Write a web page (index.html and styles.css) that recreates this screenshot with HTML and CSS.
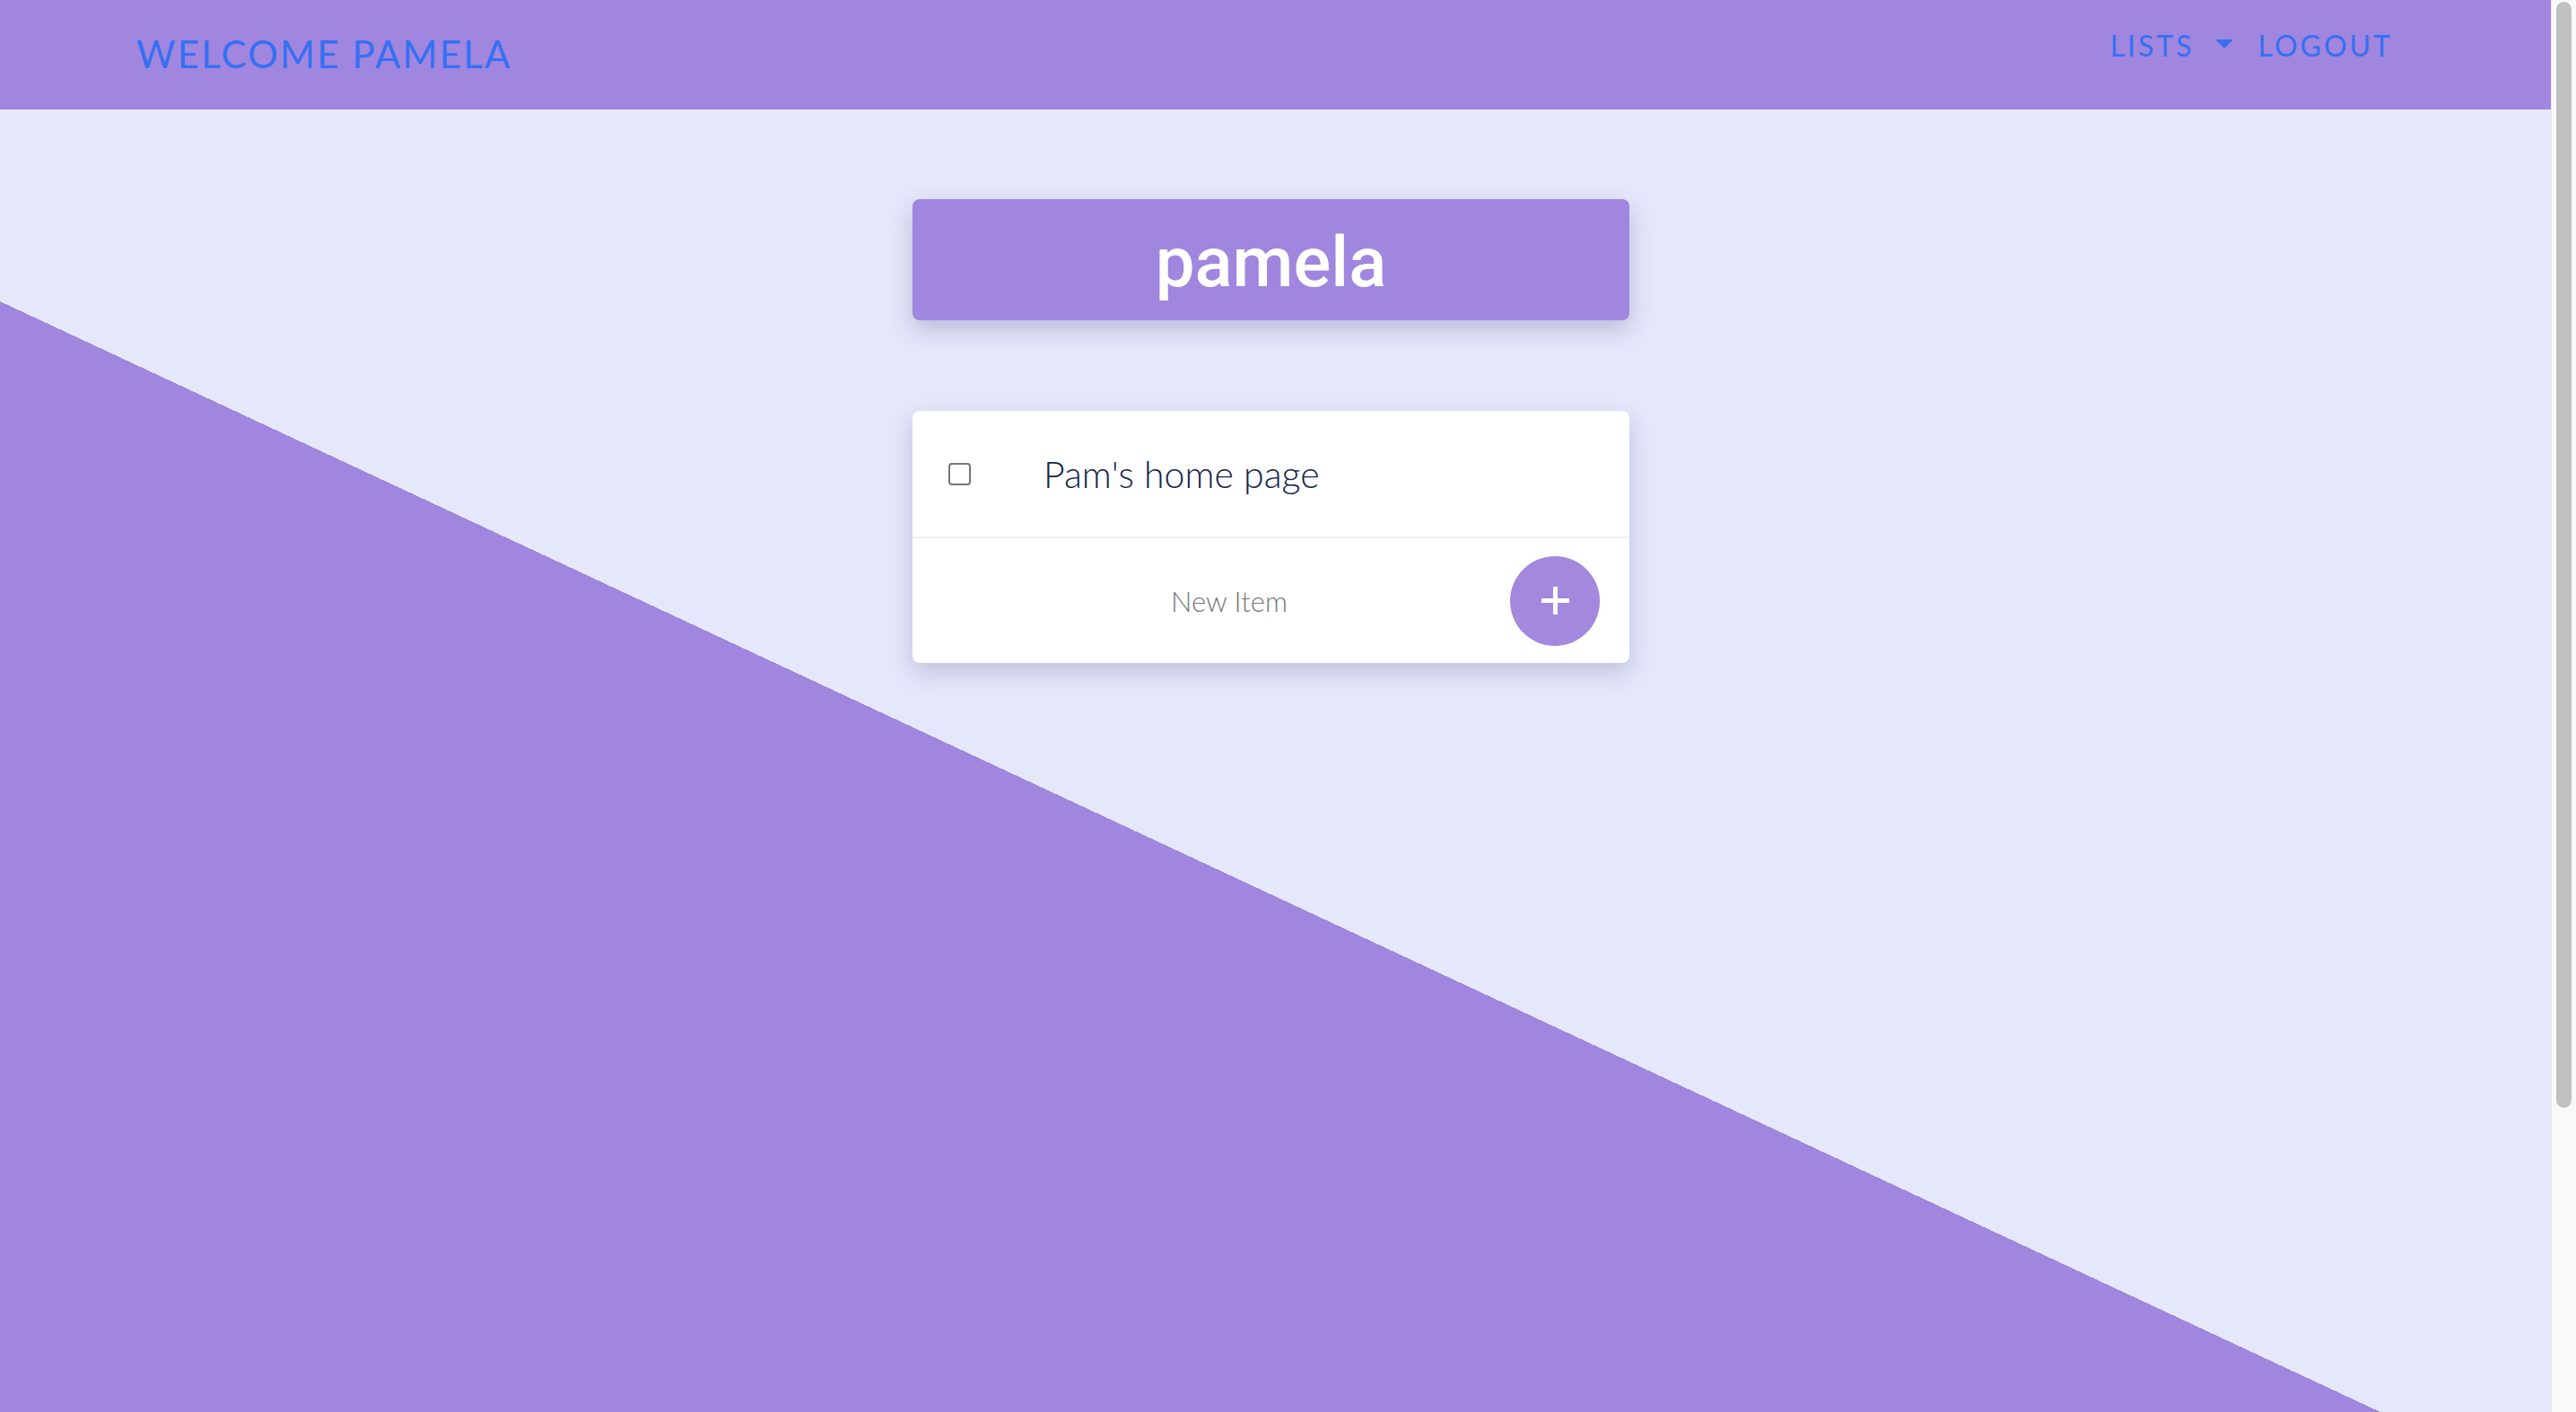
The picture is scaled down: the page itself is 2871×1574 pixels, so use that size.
FILE: index.html
```html
<!DOCTYPE html>
<html lang="en">
<head>
<meta charset="utf-8">
<title>Welcome Pamela</title>
<link rel="stylesheet" href="styles.css">
</head>
<body>
<div class="page">
  <nav class="navbar">
    <a class="brand" href="#">WELCOME PAMELA</a>
    <ul class="nav">
      <li class="nav-item dropdown"><a href="#">LISTS</a><span class="caret"></span></li>
      <li class="nav-item"><a href="#">LOGOUT</a></li>
    </ul>
  </nav>
  <main class="main">
    <div class="title-box">pamela</div>
    <div class="list-card">
      <div class="item-row">
        <input type="checkbox" class="check">
        <span class="item-text">Pam's home page</span>
      </div>
      <div class="new-row">
        <input type="text" class="new-input" placeholder="New Item">
        <button class="add-btn" type="button" aria-label="Add">
          <svg width="31" height="31" viewBox="0 0 31 31"><rect x="13" y="0" width="5" height="31" fill="#fff"/><rect x="0" y="13" width="31" height="5" fill="#fff"/></svg>
        </button>
      </div>
    </div>
  </main>
</div>
<div class="scrollbar"><div class="thumb"></div></div>
</body>
</html>
```
FILE: styles.css
```css
html, body {
  margin: 0;
  height: 100%;
}
body {
  display: flex;
  overflow: hidden;
  font-family: "Lato", "Liberation Sans", sans-serif;
}
.page {
  flex: 1;
  height: 100vh;
  background-color: #e5e8fa;
  background-image: linear-gradient(to top right, #a086de 50%, transparent 50%);
  background-size: 2653px 1238px;
  background-position: 0 336px;
  background-repeat: no-repeat;
  display: flex;
  flex-direction: column;
}
.navbar {
  height: 122px;
  background: #a086de;
  display: flex;
  justify-content: space-between;
  align-items: center;
  padding: 0 176px 0 152px;
  box-sizing: border-box;
}
.brand {
  font-family: "Lato", sans-serif;
  font-size: 42px;
  letter-spacing: 2.2px;
  color: #3470f4;
  text-decoration: none;
  line-height: 1;
  margin-bottom: 2px;
}
.nav {
  list-style: none;
  margin: 0 0 20px 0;
  padding: 0;
  display: flex;
  align-items: center;
  gap: 28px;
}
.nav-item {
  display: flex;
  align-items: center;
}
.nav-item a {
  font-family: "Lato", sans-serif;
  font-size: 32px;
  letter-spacing: 3px;
  color: #3470f4;
  text-decoration: none;
  line-height: 1;
}
.caret {
  width: 0;
  height: 0;
  border-left: 10px solid transparent;
  border-right: 10px solid transparent;
  border-top: 10px solid #3470f4;
  margin-left: 23px;
  margin-bottom: 4px;
}
.main {
  display: flex;
  flex-direction: column;
  align-items: center;
  padding: 100px 10px 0 0;
  gap: 101px;
}
.title-box {
  width: 799px;
  height: 135px;
  box-sizing: border-box;
  background: #a086de;
  border-radius: 8px;
  box-shadow: 0 10px 26px rgba(70, 70, 130, 0.28);
  color: #fff;
  font-family: "Roboto", "Liberation Sans", sans-serif;
  font-weight: 500;
  font-size: 78px;
  display: flex;
  align-items: center;
  justify-content: center;
  padding-top: 6px;
}
.list-card {
  width: 799px;
  background: #fff;
  border-radius: 8px;
  box-shadow: 0 10px 26px rgba(70, 70, 130, 0.25);
  overflow: hidden;
}
.item-row {
  height: 140px;
  display: flex;
  align-items: center;
  padding-left: 40px;
}
.check {
  -webkit-appearance: none;
  appearance: none;
  width: 25px;
  height: 25px;
  margin: 0;
  border: 2px solid #767676;
  border-radius: 4px;
  background: #fff;
  box-sizing: border-box;
}
.item-text {
  margin-left: 81px;
  font-family: "Lato", sans-serif;
  font-size: 41px;
  font-weight: 300;
  color: #15254a;
}
.new-row {
  height: 139px;
  border-top: 2px solid #f0f0f2;
  display: flex;
  align-items: center;
  padding: 0 33px 0 40px;
}
.new-input {
  flex: 1;
  min-width: 0;
  border: none;
  outline: none;
  background: transparent;
  text-align: center;
  font-family: "Lato", sans-serif;
  font-size: 31px;
  font-weight: 300;
  color: #777;
  padding: 0;
}
.new-input::placeholder {
  color: #777;
  opacity: 1;
}
.add-btn {
  width: 100px;
  height: 100px;
  border-radius: 50%;
  border: none;
  background: #a388de;
  display: flex;
  align-items: center;
  justify-content: center;
  padding: 0;
}
.scrollbar {
  width: 28px;
  height: 100vh;
  box-sizing: border-box;
  background: #f9f9f9;
  border-left: 1px solid #e9e9e9;
  padding: 2px 5px 0 5px;
}
.thumb {
  height: 1233px;
  background: #c1c1c1;
  border-radius: 9px;
}
```
